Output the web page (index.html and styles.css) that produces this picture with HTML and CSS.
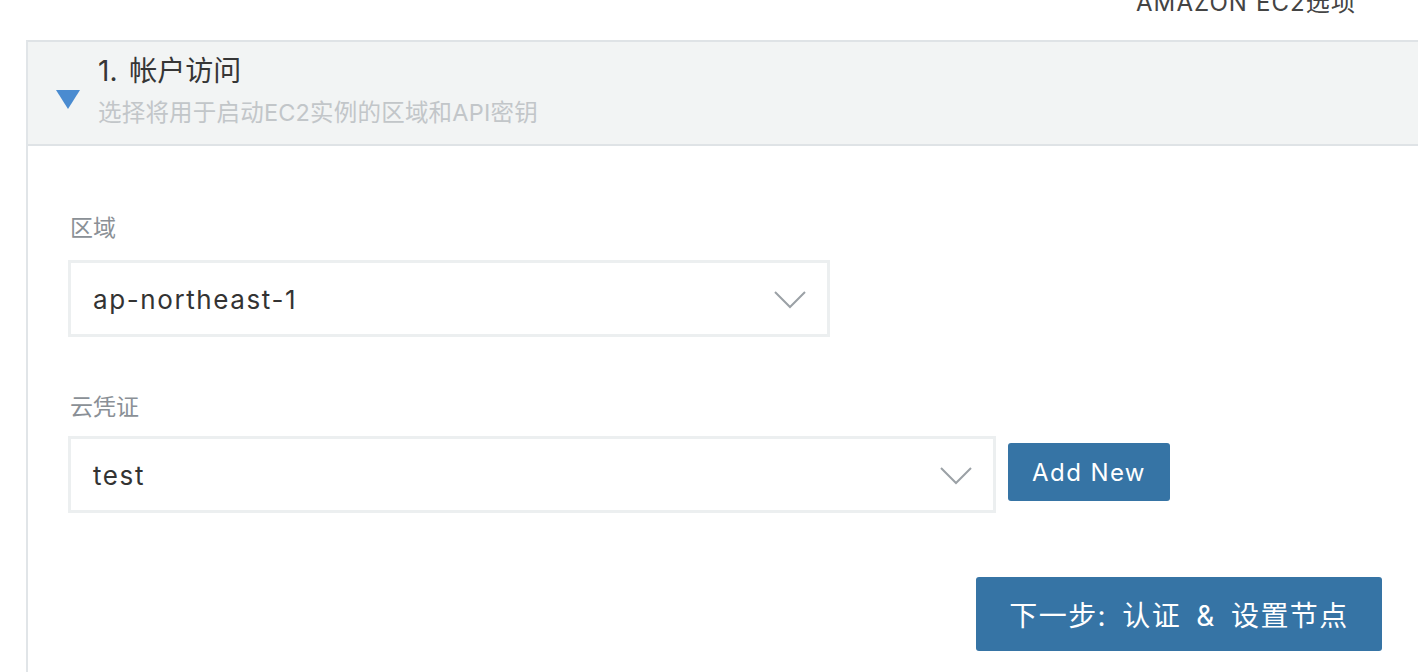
FILE: index.html
```html
<!DOCTYPE html>
<html lang="zh">
<head>
<meta charset="utf-8">
<title>Amazon EC2</title>
<link rel="stylesheet" href="styles.css">
</head>
<body>
<div class="topbar"><span class="page-title">AMAZON EC2选项</span></div>
<section class="panel">
  <div class="panel-header">
    <span class="caret"></span>
    <div class="titles">
      <div class="step-title">1. 帐户访问</div>
      <div class="step-sub">选择将用于启动EC2实例的区域和API密钥</div>
    </div>
  </div>
  <div class="panel-body">
    <div class="field first">
      <label class="label">区域</label>
      <div class="select region">
        <span class="value">ap-northeast-1</span>
        <svg class="chev" width="32" height="18" viewBox="0 0 32 18"><path d="M1 1 L16 16 L31 1" fill="none" stroke="#9ba1a6" stroke-width="2"/></svg>
      </div>
    </div>
    <div class="field second">
      <label class="label">云凭证</label>
      <div class="row">
        <div class="select cred">
          <span class="value">test</span>
          <svg class="chev" width="32" height="18" viewBox="0 0 32 18"><path d="M1 1 L16 16 L31 1" fill="none" stroke="#9ba1a6" stroke-width="2"/></svg>
        </div>
        <button class="btn btn-add">Add New</button>
      </div>
    </div>
    <div class="actions">
      <button class="btn btn-next">下一步: 认证 &amp; 设置节点</button>
    </div>
  </div>
</section>
</body>
</html>
```
FILE: styles.css
```css
html, body {
  margin: 0;
  padding: 0;
  background: #fff;
  overflow: hidden;
}
body {
  font-family: Inter, "Noto Sans CJK SC", sans-serif;
  color: #333;
  width: 1418px;
  height: 672px;
}
.topbar {
  height: 40px;
  display: flex;
  justify-content: flex-end;
  padding-right: 62px;
  overflow: hidden;
}
.page-title {
  font-size: 24px;
  line-height: 24px;
  margin-top: -9px;
  color: #444;
  letter-spacing: 1.1px;
}
.panel {
  margin-left: 26px;
  border-left: 2px solid #e1e5e8;
  border-top: 2px solid #dfe3e6;
  height: 640px;
}
.panel-header {
  height: 104px;
  background: #f2f4f4;
  border-bottom: 2px solid #dfe3e6;
  display: flex;
  align-items: center;
  box-sizing: border-box;
}
.caret {
  width: 0;
  height: 0;
  border-left: 12px solid transparent;
  border-right: 12px solid transparent;
  border-top: 19px solid #4a8bd0;
  margin-left: 28px;
  margin-top: 12px;
}
.titles {
  margin-left: 18px;
  display: flex;
  flex-direction: column;
  margin-top: -2px;
}
.step-title {
  font-size: 28px;
  line-height: 36px;
  color: #363636;
  word-spacing: 4px;
  margin-top: -2px;
}
.step-sub {
  font-size: 23.5px;
  line-height: 32px;
  color: #c2c6c9;
  margin-top: 8px;
  letter-spacing: 0.2px;
}
.panel-body {
  padding: 68px 36px 0 40px;
}
.field {
  display: flex;
  flex-direction: column;
  align-items: flex-start;
}
.field.second {
  margin-top: 56px;
}
.label {
  font-size: 23px;
  line-height: 28px;
  color: #8a9096;
  margin-left: 2px;
}
.field.first .label { margin-bottom: 18px; }
.field.second .label { margin-bottom: 15px; }
.select {
  box-sizing: border-box;
  height: 77px;
  border: 3px solid #eceff0;
  background: #fff;
  display: flex;
  align-items: center;
  justify-content: space-between;
  padding: 0 21px 0 22px;
}
.select.region { width: 762px; }
.select.cred { width: 928px; }
.value {
  font-size: 26px;
  color: #333;
  margin-top: 2px;
  letter-spacing: 1.6px;
}
.chev { display: block; margin-top: 2px; }
.row {
  display: flex;
  align-items: center;
  gap: 12px;
}
.btn {
  font-family: Inter, "Noto Sans CJK SC", sans-serif;
  background: #3674a5;
  color: #fff;
  border: none;
  border-radius: 3px;
  padding: 0;
  cursor: pointer;
}
.btn-add {
  width: 162px;
  height: 58px;
  font-size: 24px;
  margin-top: -5px;
  letter-spacing: 1.4px;
}
.actions {
  display: flex;
  justify-content: flex-end;
  margin-top: 64px;
}
.btn-next {
  width: 406px;
  height: 74px;
  font-size: 28px;
  letter-spacing: 1.4px;
  word-spacing: 6px;
}
```
